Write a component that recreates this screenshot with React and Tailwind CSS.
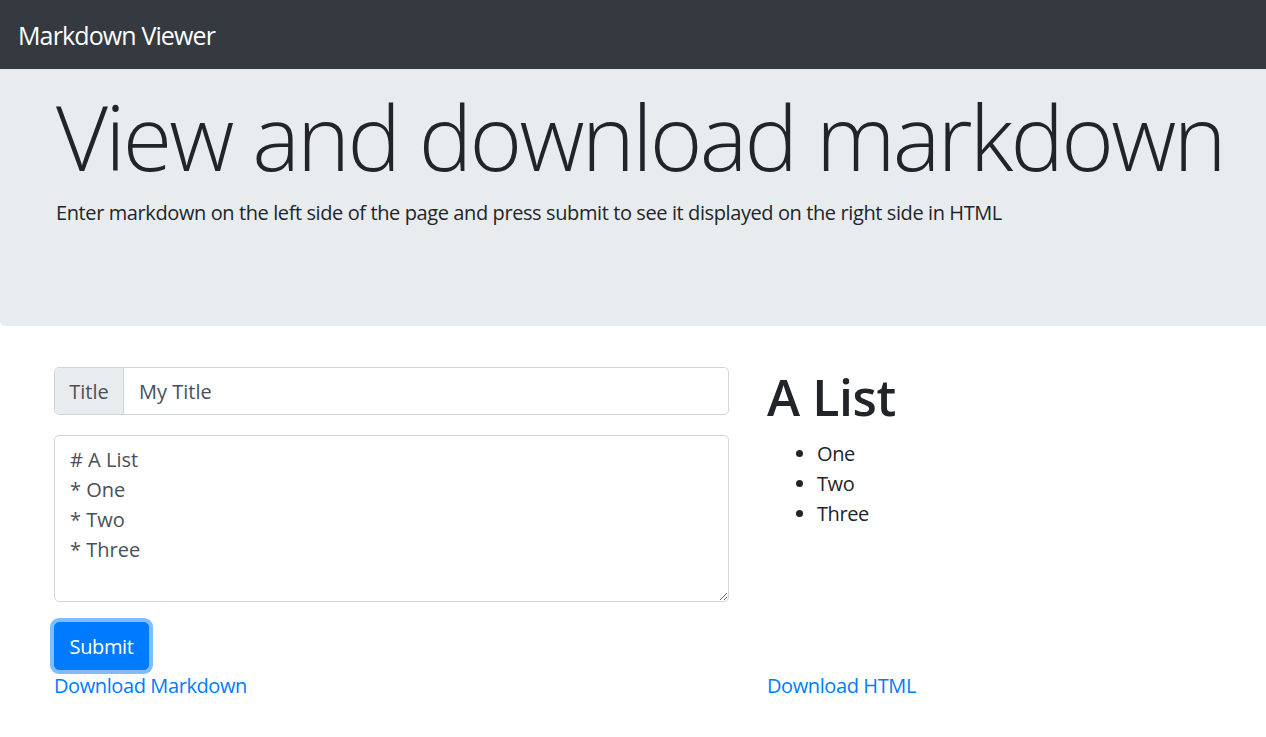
import React from 'react';

const markdown = `# A List
* One
* Two
* Three`;

const App = () => {
    return (
        <div className="min-h-screen bg-white text-[#212529] tracking-[-0.025em] font-['Segoe_UI','Open_Sans',sans-serif]">
            <nav className="h-[69px] bg-[#343a40] flex items-center px-[18px] pt-[2px]">
                <a href="#" className="text-white text-[25px] leading-none tracking-[-0.035em]">Markdown Viewer</a>
            </nav>

            <header className="h-[257px] bg-[#e9ecef] rounded-bl-[5px] pt-[13px] pl-[56px]">
                <h1 className="text-[90px] font-light leading-[1.2] tracking-[-0.031em] whitespace-nowrap">View and download markdown</h1>
                <p className="mt-[8px] text-[20px] leading-[30px]">
                    Enter markdown on the left side of the page and press submit to see it displayed on the right side in HTML
                </p>
            </header>

            <main className="pt-[41px] pl-[54px] grid grid-cols-[675px_1fr] gap-x-[38px]">
                <form className="flex flex-col" onSubmit={e => e.preventDefault()}>
                    <div className="flex h-[48px] border border-[#ced4da] rounded-[5px] text-[20px] text-[#495057] tracking-normal">
                        <span className="w-[69px] pt-[1px] flex items-center justify-center bg-[#e9ecef] border-r border-[#ced4da] rounded-l-[5px]">Title</span>
                        <input
                            defaultValue="My Title"
                            className="flex-1 px-[15px] pt-[2px] bg-transparent outline-none rounded-r-[5px]"
                        />
                    </div>
                    <textarea
                        defaultValue={markdown}
                        className="mt-[20px] h-[167px] border border-[#ced4da] rounded-[5px] px-[15px] pt-[9px] pb-[7px] text-[20px] leading-[30px] text-[#495057] tracking-normal outline-none"
                    />
                    <button
                        type="submit"
                        className="mt-[20px] self-start w-[95px] h-[48px] pt-[2px] bg-[#007bff] border border-[#007bff] rounded-[5px] text-white text-[20px] shadow-[0_0_0_4px_rgba(0,123,255,0.5)]"
                    >
                        Submit
                    </button>
                </form>

                <section>
                    <h1 className="text-[50px] font-semibold leading-[1.2] mb-[10px]">A List</h1>
                    <ul className="list-disc pl-[50px] pt-[2px] text-[20px] leading-[30px]">
                        <li>One</li>
                        <li>Two</li>
                        <li>Three</li>
                    </ul>
                </section>

                <a href="#" className="pt-[1px] text-[#007bff] text-[20px] leading-[30px] justify-self-start">Download Markdown</a>
                <a href="#" className="pt-[1px] text-[#007bff] text-[20px] leading-[30px] justify-self-start">Download HTML</a>
            </main>
        </div>
    );
};

export default App;
